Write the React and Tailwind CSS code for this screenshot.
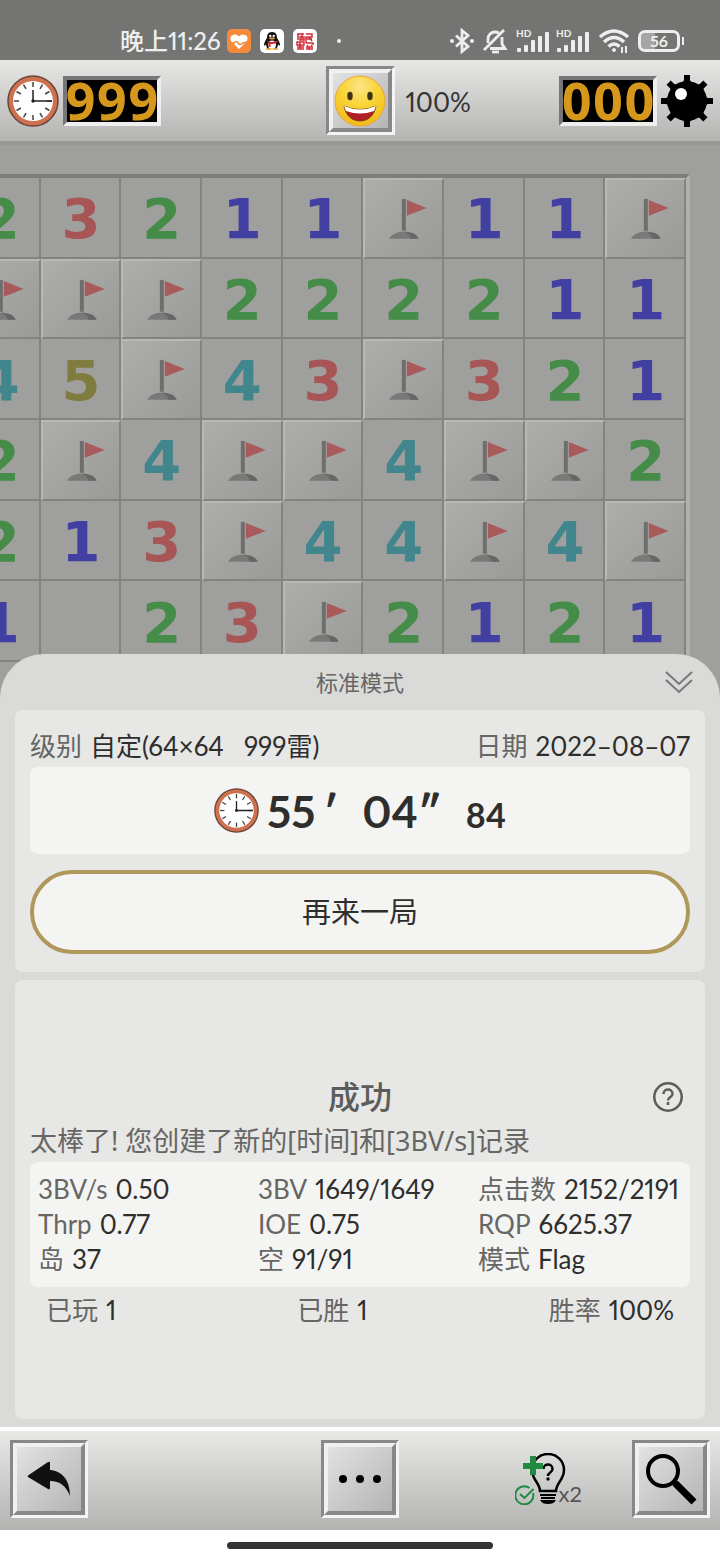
import { useState } from "react";

/* ================= DATA ================= */
// "F" = flagged cell, "0" = opened empty cell
const BOARD = ["23211F11F", "FFF222211", "45F43F321", "2F4FF4FF2", "213F44F4F", "1023F2121"];

const NUMBER_COLORS = {
  1: "text-[#423fa3]",
  2: "text-[#448c48]",
  3: "text-[#a85556]",
  4: "text-[#41858d]",
  5: "text-[#807c40]",
};

const STATS = [
  ["3BV/s", "0.50"],
  ["3BV", "1649/1649"],
  ["点击数", "2152/2191"],
  ["Thrp", "0.77"],
  ["IOE", "0.75"],
  ["RQP", "6625.37"],
  ["岛", "37"],
  ["空", "91/91"],
  ["模式", "Flag"],
];

const TOTALS = [
  ["已玩", "1"],
  ["已胜", "1"],
  ["胜率", "100%"],
];

/* ================= ICONS ================= */
const ClockIcon = ({ className }) => (
  <svg viewBox="0 0 52 52" className={className} aria-hidden="true">
    <circle cx="26" cy="26" r="25" fill="#cd7150" stroke="#6b4437" strokeWidth="1.5" />
    <circle cx="26" cy="26" r="20" fill="#fff" />
    {Array.from({ length: 12 }, (_, i) => (
      <path key={i} d="M26 7v5" stroke="#444" strokeWidth="1.5" transform={`rotate(${i * 30} 26 26)`} />
    ))}
    <path d="M26 15v11h19" fill="none" stroke="#222" strokeWidth="1.5" />
    <circle cx="26" cy="26" r="1.7" fill="#222" />
  </svg>
);

const FlagIcon = () => (
  <svg viewBox="0 0 77 77" className="w-full" aria-hidden="true">
    <rect x="37" y="19" width="4" height="32" fill="#6e6e6d" />
    <path d="M42 20l20 8-20 8z" fill="#a95b5c" />
    <path d="M24 59c4-6 10-7 14-7 8 0 13 2 15 7z" fill="#797978" />
    <path d="M39 52c5 1 6 5 7 7h8c-2-5-8-7-15-7z" fill="#666665" />
  </svg>
);

const FaceIcon = () => (
  <svg viewBox="0 0 52 52" className="size-[52px]" aria-hidden="true">
    <defs>
      <radialGradient id="face" cx="50%" cy="22%" r="75%">
        <stop offset="0" stopColor="#fbe48c" />
        <stop offset="0.45" stopColor="#f8d63a" />
        <stop offset="1" stopColor="#f2bd1c" />
      </radialGradient>
    </defs>
    <circle cx="26" cy="26" r="25" fill="url(#face)" stroke="#eaa53c" strokeWidth="1" />
    <ellipse cx="16" cy="21" rx="2.7" ry="4.2" fill="#3f3212" />
    <ellipse cx="36" cy="21" rx="2.7" ry="4.2" fill="#3f3212" />
    <path d="M10 31q16 7 32 0c-2 10-8 15-16 15s-14-5-16-15z" fill="#b01f23" stroke="#6b3c10" strokeWidth="0.8" />
    <path d="M10 31q16 7 32 0l-2 5q-14 5-28 0z" fill="#fff" />
  </svg>
);

const MineIcon = () => (
  <svg viewBox="0 0 52 52" className="size-[52px]" aria-hidden="true">
    {Array.from({ length: 8 }, (_, i) => (
      <path key={i} d="M23 0h6v5l2 5h-10l2-5z" transform={`rotate(${i * 45} 26 26)`} />
    ))}
    <circle cx="26" cy="26" r="20" />
    <circle cx="20" cy="19" r="6" fill="#fff" />
  </svg>
);

const SignalIcon = () => (
  <svg viewBox="0 0 34 26" className="h-[26px] w-[34px]" fill="#eee" aria-hidden="true">
    <text x="0" y="9" fontSize="10" fontWeight="700" fontFamily="Lato, sans-serif">HD</text>
    <rect x="1" y="20" width="4" height="4" rx="1" />
    <rect x="8" y="17" width="4" height="7" rx="1" />
    <rect x="15" y="12" width="4" height="12" rx="1" />
    <rect x="22" y="8" width="4" height="16" rx="1" />
    <rect x="29" y="4" width="4" height="20" rx="1" />
  </svg>
);

const HintIcon = () => (
  <svg viewBox="0 0 52 52" className="size-[52px]" aria-hidden="true">
    <path
      d="M25 38h16c0-8 8-11 8-21 0-9-7-16-16-16s-16 7-16 16c0 10 8 13 8 21z"
      fill="none"
      stroke="#000"
      strokeWidth="2.5"
    />
    <path d="M25 42h16M26 45h14" stroke="#000" strokeWidth="2" />
    <path d="M25 47h16c-2 3-4 4-8 4s-6-1-8-4z" />
    <path d="M28.5 16c0-6 9-6 9 0 0 4-4.5 3-4.5 7" fill="none" stroke="#000" strokeWidth="2.5" />
    <circle cx="33" cy="26" r="1.7" />
    <path d="M15 3h6v7h7v6h-7v6h-6v-6H8v-6h7z" fill="#1f8a40" />
    <path d="M14.500 35a9 9 0 1 0 3.500 5" fill="none" stroke="#1f8a40" strokeWidth="2" />
    <path d="M5 41l4.500 4 9-9" fill="none" stroke="#1f8a40" strokeWidth="2" />
  </svg>
);

/* ================= PIECES ================= */
const StatusBar = () => (
  <header className="flex h-[60px] items-center bg-[#747473] pt-[22px] pr-9 pl-[120px] text-[#eee]">
    <span className="text-[24px] leading-none font-medium whitespace-nowrap">晚上11:26</span>
    <div className="ml-1.5 flex items-center gap-[9px]">
      <svg viewBox="0 0 24 24" className="size-6">
        <rect width="24" height="24" rx="5" fill="#f58a3c" />
        <path d="M12 20L4.500 12.500C1 8 7 2.500 12 7.500c5-5 11 .5 7.500 5z" fill="#fff" />
        <path d="M2 14h5q2-3 4 0t5 0l5-1" fill="none" stroke="#f58a3c" strokeWidth="1.500" />
      </svg>
      <svg viewBox="0 0 24 24" className="size-6">
        <rect width="24" height="24" rx="5" fill="#fff" />
        <path d="M12 3c-4 0-5 3-5 6-2 3-3 5-3 7 0 1 1 1 2-1 0 2 1 4 2 5h8c1-1 2-3 2-5 1 2 2 2 2 1 0-2-1-4-3-7 0-3-1-6-5-6z" fill="#111" />
        <ellipse cx="12" cy="16" rx="4" ry="4.500" fill="#fff" />
        <circle cx="10.300" cy="7" r="1.200" fill="#fff" />
        <circle cx="13.700" cy="7" r="1.200" fill="#fff" />
        <ellipse cx="12" cy="9.500" rx="3" ry="1" fill="#f5a623" />
        <path d="M6.500 11.500q5.500 3 11 0v2q-3 1.500-7 1.500v3h-2v-4z" fill="#d8232a" />
        <path d="M6 20h5.500M12.500 20H18" stroke="#f5a623" strokeWidth="1.500" />
      </svg>
      <svg viewBox="0 0 24 24" className="size-6">
        <rect width="24" height="24" rx="5" fill="#fff" />
        <path
          d="M4 5h7M5 5v6M7 8h4v3H7zM9 5v6M13 5h6v3h-6v6M13 10h6M16 8l3 4M4 13h7v3H4zM7 13v7M4 18h7M4 20h7M13 14h7v2M15 16l-1 1M18 16l1 1M13 18h7M16 18v2M13 20h7"
          fill="none"
          stroke="#d02d36"
          strokeWidth="1.500"
        />
      </svg>
    </div>
    <span className="ml-5 size-1 rounded-full bg-[#eee]" />

    <div className="ml-auto flex items-center gap-1.5">
      <svg viewBox="0 0 24 26" className="h-[26px] w-6" fill="none" stroke="#eee" strokeWidth="2.8">
        <path d="M6 7.500l12 11-6 5V2.500l6 5-12 11" />
        <circle cx="2" cy="13" r="2" fill="#eee" stroke="none" />
        <circle cx="22" cy="13" r="2" fill="#eee" stroke="none" />
      </svg>
      <svg viewBox="0 0 26 26" className="mx-0.5 size-[26px]" fill="none" stroke="#eee" strokeWidth="2.8">
        <path d="M2 22L22 2" />
        <path d="M6 15v-4c0-4 3-7 7-7 1.500 0 3 .5 4 1.200M20 9v7l3 4.500H8" />
        <path d="M10 24h7" />
      </svg>
      <SignalIcon />
      <SignalIcon />
      <svg viewBox="0 0 32 26" className="mx-0.5 h-[26px] w-8" fill="none" stroke="#eee" strokeWidth="3.5">
        <path d="M2 9q14-12 28 0M6 14q10-9 20 0M10.500 18.500q5.500-5 11 0" />
        <circle cx="16" cy="22" r="1.500" fill="#eee" strokeWidth="1" />
        <path d="M24 25v-6M28 18v7" strokeWidth="2" />
      </svg>
      <div className="flex items-center">
        <div className="flex h-[22px] w-[42px] items-center justify-center rounded-[7px] border-[3px] border-[#eee] bg-linear-to-r from-[#a5a5a4] from-40% to-[#747473] to-40% text-base leading-none font-bold">
          56
        </div>
        <span className="ml-0.5 h-2 w-0.5 bg-[#eee]" />
      </div>
    </div>
  </header>
);

const Counter = ({ value }) => (
  <div className="flex h-[50px] w-[98px] items-center justify-center border-4 border-t-[#777] border-r-[#eee] border-b-[#eee] border-l-[#777] bg-black pb-0.5 text-[52px] leading-none font-bold text-[#d5971c] [font-family:'Noto_Sans',sans-serif]">
    {value}
  </div>
);

// two nested borders give the raised look of the old desktop buttons
const BevelButton = ({ label, className, children }) => (
  <button
    type="button"
    aria-label={label}
    className={`border-[3px] border-t-[#888] border-r-[#f4f4f4] border-b-[#f4f4f4] border-l-[#888] ${className}`}
  >
    <span className="flex size-full items-center justify-center border-4 border-t-[#f0f0f0] border-r-[#878787] border-b-[#878787] border-l-[#f0f0f0] bg-linear-to-br from-[#e2e2e2] to-[#b4b4b4]">
      {children}
    </span>
  </button>
);

const Cell = ({ value }) => {
  if (value === "F") {
    return (
      <button
        type="button"
        aria-label="旗"
        className="aspect-square border-2 border-t-[#b8b8b6] border-r-[#838382] border-b-[#838382] border-l-[#b8b8b6] bg-linear-to-br from-[#adadac] to-[#9a9a99]"
      >
        <FlagIcon />
      </button>
    );
  }

  return (
    <div
      className={`flex aspect-square items-center justify-center border-r-2 border-b-2 border-[#838382] bg-[#9f9f9d] pt-1 pl-0.5 text-[56px] leading-none font-bold [font-family:'DejaVu_Sans',sans-serif] ${NUMBER_COLORS[value] || ""}`}
    >
      {value !== "0" && value}
    </div>
  );
};

const Pair = ({ label, value }) => (
  <div className="flex gap-2 whitespace-nowrap">
    <dt className="text-[#666664]">{label}</dt>
    <dd className="text-[#2e2e2d]">{value}</dd>
  </div>
);

/* ================= PAGE ================= */
const App = () => {
  const [open, setOpen] = useState(true);

  return (
    <div className="flex min-h-screen flex-col overflow-hidden bg-white proportional-nums [font-family:Lato,'Noto_Sans_CJK_SC',sans-serif]">
      <StatusBar />

      {/* TOOLBAR */}
      <div className="grid h-[85px] grid-cols-[1fr_auto_1fr] items-center border-b-4 border-[#989897] bg-linear-to-b from-[#e7e7e6] to-[#b4b4b3] px-[7px]">
        <div className="flex items-center gap-1">
          <ClockIcon className="size-[52px]" />
          <Counter value="999" />
        </div>
        <BevelButton label="新游戏" className="size-[69px]">
          <FaceIcon />
        </BevelButton>
        <div className="flex items-center gap-1 pl-[11px]">
          <span className="mr-auto pt-1 text-[26px] text-[#333]">100%</span>
          <Counter value="000" />
          <MineIcon />
        </div>
      </div>

      {/* BOARD */}
      <div className="bg-[#9f9f9d] pt-[29px] pr-[30px] pb-10">
        <div className="flex justify-end overflow-hidden border-t-4 border-r-4 border-t-[#7d7d7c] border-r-[#b0b0af]">
          <div className="grid w-[726px] shrink-0 grid-cols-9">
            {BOARD.flatMap((row, y) => [...row].map((value, x) => <Cell key={`${y}-${x}`} value={value} />))}
          </div>
        </div>
      </div>

      {/* RESULT SHEET */}
      <section className="relative -mt-12 flex grow flex-col rounded-t-[44px] bg-[#dadad8] px-[15px] pb-2">
        <div className="grid h-14 grid-cols-[1fr_auto_1fr] items-center text-[22px] text-[#666664]">
          <h2 className="col-start-2">标准模式</h2>
          <button
            type="button"
            aria-label="收起"
            aria-expanded={open}
            onClick={() => setOpen(!open)}
            className="mr-3 justify-self-end"
          >
            <svg viewBox="0 0 28 24" className="h-6 w-7" fill="none" stroke="#777" strokeWidth="2">
              <path d="M1 2l13 12L27 2M1 10l13 12 13-12" />
            </svg>
          </button>
        </div>

        {open && (
          <>
            <div className="rounded-lg bg-[#e7e7e5] px-[15px] pt-[18px] pb-[18px]">
              <dl className="mb-0.5 flex justify-between text-[26px] leading-[37px]">
                <Pair
                  label="级别"
                  value={
                    <span className="flex gap-5">
                      <span>自定(64×64</span>
                      <span>999雷)</span>
                    </span>
                  }
                />
                <Pair label="日期" value="2022–08–07" />
              </dl>

              <div className="flex h-[87px] items-center justify-center rounded-lg bg-[#f4f4f2] text-[#2e2e2d]">
                <ClockIcon className="mr-2 size-[45px]" />
                <div className="flex items-baseline text-[44px] leading-none font-bold">
                  <span>55</span>
                  <span className="mr-6 ml-2">′</span>
                  <span>04</span>
                  <span className="mr-6">″</span>
                  <span className="text-[34px]">84</span>
                </div>
              </div>

              <button
                type="button"
                className="mt-4 h-[84px] w-full rounded-full border-4 border-[#b0975c] bg-[#f4f4f2] text-[29px] text-[#2e2e2d]"
              >
                再来一局
              </button>
            </div>

            <div className="mt-2 flex grow flex-col justify-center rounded-lg bg-[#e7e7e5] px-[15px] pt-2 text-[26px]">
              <div className="grid grid-cols-[1fr_auto_1fr] items-center">
                <h3 className="col-start-2 text-[32px] leading-[44px] font-medium text-[#5c5c5a]">成功</h3>
                <button type="button" aria-label="帮助" className="mr-1.5 justify-self-end">
                  <svg viewBox="0 0 32 32" className="size-8" fill="none" stroke="#5c5c5a" strokeWidth="2.500">
                    <circle cx="16" cy="16" r="13.700" />
                    <path d="M11.500 13c0-6 9-6 9 0 0 3-4.500 3-4.500 6.500M16 21v3" />
                  </svg>
                </button>
              </div>
              <p className="text-[27px] leading-[43px] whitespace-nowrap text-[#666664] [font-family:'Noto_Sans','Noto_Sans_CJK_SC',sans-serif]">
                太棒了! 您创建了新的[时间]和[3BV/s]记录
              </p>
              <dl className="grid grid-cols-3 rounded-lg bg-[#f4f4f2] py-[10px] leading-[35px]">
                {STATS.map(([label, value]) => (
                  <div key={label} className="pl-2">
                    <Pair label={label} value={value} />
                  </div>
                ))}
              </dl>
              <dl className="flex justify-between px-4 leading-[46px]">
                {TOTALS.map(([label, value]) => (
                  <Pair key={label} label={label} value={value} />
                ))}
              </dl>
            </div>
          </>
        )}
      </section>

      {/* BOTTOM BAR */}
      <nav className="grid h-[103px] grid-cols-[1fr_auto_1fr] items-center border-t-4 border-white bg-linear-to-b from-[#e9e9e7] to-[#b3b3b2] px-[10px] pb-1">
        <BevelButton label="返回" className="size-[78px]">
          <svg viewBox="0 0 44 36" className="h-9 w-11" fill="#111" aria-hidden="true">
            <path d="M1 14.500L21 1Q23 0 23 2v7c13 1 20 11 20 26-4-10-10-15-20-15v7q0 2-2 1L1 16q-1-.7 0-1.500z" />
          </svg>
        </BevelButton>
        <BevelButton label="更多" className="size-[78px]">
          <svg viewBox="0 0 44 10" className="h-[10px] w-11" aria-hidden="true">
            <circle cx="5" cy="5" r="4" />
            <circle cx="22" cy="5" r="4" />
            <circle cx="39" cy="5" r="4" />
          </svg>
        </BevelButton>
        <div className="flex items-center justify-end gap-[50px]">
          <button type="button" aria-label="提示" className="flex items-end text-[22px] leading-none text-[#555]">
            <HintIcon />
            <span className="-ml-2">x2</span>
          </button>
          <BevelButton label="缩放" className="size-[78px]">
            <svg viewBox="0 0 52 52" className="size-[52px]" fill="none" stroke="#000" aria-hidden="true">
              <circle cx="18" cy="18" r="15" strokeWidth="4" />
              <path d="M28 28l4 4" strokeWidth="4" />
              <path d="M30 30l19 19" strokeWidth="7" />
            </svg>
          </BevelButton>
        </div>
      </nav>

      {/* HOME INDICATOR */}
      <div className="flex h-[30px] items-center justify-center bg-white">
        <span className="h-[7px] w-[266px] rounded-full bg-[#333]" />
      </div>
    </div>
  );
};

export default App;
